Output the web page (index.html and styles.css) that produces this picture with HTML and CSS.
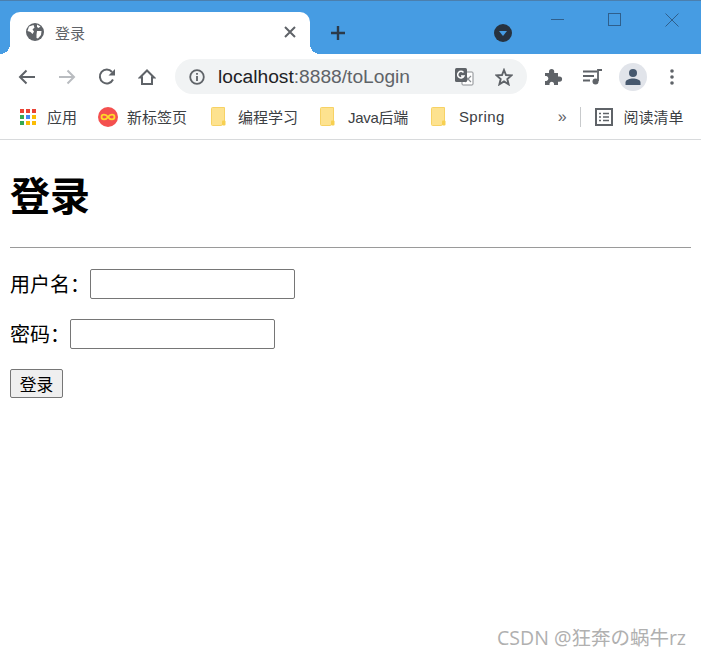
FILE: index.html
```html
<!DOCTYPE html>
<html lang="zh-CN">
<head>
    <meta charset="UTF-8">
    <title>登录</title>
    <link rel="stylesheet" href="styles.css">
</head>
<body>
    <div class="browser">
        <div class="tabstrip">
            <div class="tab">
                <svg class="tab-globe" width="18" height="18" viewBox="0 0 18 18">
                    <circle cx="9" cy="9" r="9" fill="#5f6368"/>
                    <path d="M3 3.5 L7.5 2 L8.5 4.5 L6.5 6.5 L8 8.5 L6.5 11 L4.5 9 L1.5 8 Z M11 8 L15.5 8 L15 12 L12 15.5 L10.5 15 L10.5 11.5 Z M11 1.5 L14.5 3.5 L12.5 5 L11 4 Z" fill="#fff"/>
                </svg>
                <span class="tab-title">登录</span>
                <svg class="tab-close" width="12" height="12" viewBox="0 0 12 12">
                    <path d="M1 1 L11 11 M11 1 L1 11" stroke="#5f6368" stroke-width="2"/>
                </svg>
            </div>
            <svg class="new-tab" width="16" height="16" viewBox="0 0 16 16">
                <path d="M8 1 V15 M1 8 H15" stroke="#2b3a4a" stroke-width="2.4"/>
            </svg>
            <svg class="tab-search" width="18" height="18" viewBox="0 0 18 18">
                <circle cx="9" cy="9" r="9" fill="#27323f"/>
                <path d="M5 7 H13 L9 12 Z" fill="#469ce3"/>
            </svg>
            <div class="win-controls">
                <svg width="14" height="14" viewBox="0 0 14 14"><path d="M0 6.5 H13" stroke="#2f5f8c"/></svg>
                <svg width="14" height="14" viewBox="0 0 14 14"><rect x="0.5" y="0.5" width="12" height="12" fill="none" stroke="#2f5f8c"/></svg>
                <svg width="14" height="14" viewBox="0 0 14 14"><path d="M0.5 0.5 L13.5 13.5 M13.5 0.5 L0.5 13.5" stroke="#2f5f8c"/></svg>
            </div>
        </div>

        <div class="toolbar">
            <svg class="tool back" width="18" height="16" viewBox="0 0 18 16">
                <path d="M17 8 H2 M8.5 1.5 L2 8 L8.5 14.5" fill="none" stroke="#5f6368" stroke-width="2"/>
            </svg>
            <svg class="tool forward" width="18" height="16" viewBox="0 0 18 16">
                <path d="M1 8 H16 M9.5 1.5 L16 8 L9.5 14.5" fill="none" stroke="#b9bcc0" stroke-width="2"/>
            </svg>
            <svg class="tool reload" width="18" height="18" viewBox="0 0 18 18">
                <path d="M15 11.5 A6.9 6.9 0 1 1 14 4" fill="none" stroke="#5f6368" stroke-width="2"/>
                <path d="M17 1 V7.5 H10.5 Z" fill="#5f6368"/>
            </svg>
            <svg class="tool home" width="18" height="18" viewBox="0 0 18 18">
                <path d="M2 9.5 L9 2.5 L16 9.5 H14 V16 H4 V9.5 Z" fill="none" stroke="#5f6368" stroke-width="2" stroke-linejoin="miter"/>
            </svg>
            <div class="omnibox">
                <svg width="16" height="16" viewBox="0 0 16 16">
                    <circle cx="8" cy="8" r="6.8" fill="none" stroke="#5f6368" stroke-width="1.8"/>
                    <path d="M8 7 V12 M8 4 V5.8" stroke="#5f6368" stroke-width="1.8"/>
                </svg>
                <span class="url"><span class="host">localhost</span>:8888/toLogin</span>
                <svg class="translate" width="20" height="20" viewBox="0 0 20 20">
                    <rect x="8" y="5" width="11" height="13" rx="1" fill="#fff" stroke="#8a8d91"/>
                    <path d="M11 9 L17 15 M17 9 L11 15" stroke="#8a8d91" stroke-width="1.2"/>
                    <rect x="1" y="1" width="12" height="14" rx="1.5" fill="#5f6368"/>
                    <path d="M9.5 5.5 A3.3 3.3 0 1 0 10 9 H7" fill="none" stroke="#fff" stroke-width="1.5"/>
                </svg>
                <svg class="star" width="18" height="18" viewBox="0 0 18 18">
                    <path d="M9 2 L11 7 L16.5 7.4 L12.3 11 L13.6 16.3 L9 13.4 L4.4 16.3 L5.7 11 L1.5 7.4 L7 7 Z" fill="none" stroke="#5f6368" stroke-width="1.9"/>
                </svg>
            </div>
            <svg class="puzzle" width="20" height="20" viewBox="0 0 20 20">
                <path d="M2 6 H6 V4.5 A2.6 2.6 0 0 1 11.2 4.5 V6 H15 V9.5 H16.5 A2.6 2.6 0 0 1 16.5 14.7 H15 V18 H11 V16.5 A2.3 2.3 0 0 0 6.5 16.5 V18 H2 V14 H3.5 A2.6 2.6 0 0 0 3.5 9 H2 Z" fill="#5f6368"/>
            </svg>
            <svg class="media" width="20" height="16" viewBox="0 0 20 16">
                <path d="M0 2.5 H14 M0 7 H11 M0 11.5 H7" stroke="#5f6368" stroke-width="1.8"/>
                <path d="M15 12 V1 H19" fill="none" stroke="#5f6368" stroke-width="1.8"/>
                <circle cx="12.5" cy="12.5" r="3" fill="#5f6368"/>
            </svg>
            <div class="avatar">
                <svg width="18" height="18" viewBox="0 0 18 18">
                    <circle cx="9" cy="5" r="4" fill="#46586e"/>
                    <path d="M1.5 17 V14.5 C1.5 11.5 6 10.5 9 10.5 C12 10.5 16.5 11.5 16.5 14.5 V17 Z" fill="#46586e"/>
                </svg>
            </div>
            <svg class="menu" width="4" height="16" viewBox="0 0 4 16">
                <circle cx="2" cy="2" r="1.8" fill="#5f6368"/>
                <circle cx="2" cy="8" r="1.8" fill="#5f6368"/>
                <circle cx="2" cy="14" r="1.8" fill="#5f6368"/>
            </svg>
        </div>

        <div class="bookmarks">
            <div class="bookmark apps">
                <svg width="16" height="16" viewBox="0 0 16 16">
                    <rect x="0" y="0" width="4" height="4" fill="#ea4335"/><rect x="6" y="0" width="4" height="4" fill="#ea4335"/><rect x="12" y="0" width="4" height="4" fill="#ea4335"/>
                    <rect x="0" y="6" width="4" height="4" fill="#34a853"/><rect x="6" y="6" width="4" height="4" fill="#4285f4"/><rect x="12" y="6" width="4" height="4" fill="#fbbc04"/>
                    <rect x="0" y="12" width="4" height="4" fill="#34a853"/><rect x="6" y="12" width="4" height="4" fill="#fbbc04"/><rect x="12" y="12" width="4" height="4" fill="#fbbc04"/>
                </svg>
                <span>应用</span>
            </div>
            <div class="bookmark newtab">
                <svg width="20" height="20" viewBox="0 0 20 20">
                    <circle cx="10" cy="10" r="10" fill="#f4504f"/>
                    <path d="M10 10 C8 6.8 3.5 7 3.5 10 C3.5 13 8 13.2 10 10 C12 6.8 16.5 7 16.5 10 C16.5 13 12 13.2 10 10 Z" fill="none" stroke="#ffd928" stroke-width="1.8"/>
                </svg>
                <span>新标签页</span>
            </div>
            <div class="bookmark study">
                <svg class="folder" width="15" height="19" viewBox="0 0 15 19">
                    <path d="M1.5 0.5 H13.5 V14 L10.5 18.5 H1.5 A1 1 0 0 1 0.5 17.5 V1.5 A1 1 0 0 1 1.5 0.5 Z" fill="#fde28f" stroke="#f7d265"/>
                    <rect x="11" y="13.5" width="3.5" height="5" rx="1" fill="#f7d050"/>
                </svg>
                <span>编程学习</span>
            </div>
            <div class="bookmark java">
                <svg class="folder" width="15" height="19" viewBox="0 0 15 19">
                    <path d="M1.5 0.5 H13.5 V14 L10.5 18.5 H1.5 A1 1 0 0 1 0.5 17.5 V1.5 A1 1 0 0 1 1.5 0.5 Z" fill="#fde28f" stroke="#f7d265"/>
                    <rect x="11" y="13.5" width="3.5" height="5" rx="1" fill="#f7d050"/>
                </svg>
                <span>Java后端</span>
            </div>
            <div class="bookmark spring">
                <svg class="folder" width="15" height="19" viewBox="0 0 15 19">
                    <path d="M1.5 0.5 H13.5 V14 L10.5 18.5 H1.5 A1 1 0 0 1 0.5 17.5 V1.5 A1 1 0 0 1 1.5 0.5 Z" fill="#fde28f" stroke="#f7d265"/>
                    <rect x="11" y="13.5" width="3.5" height="5" rx="1" fill="#f7d050"/>
                </svg>
                <span>Spring</span>
            </div>
            <span class="more">»</span>
            <span class="divider"></span>
            <div class="bookmark reading">
                <svg width="18" height="18" viewBox="0 0 18 18">
                    <rect x="1" y="1" width="16" height="16" fill="none" stroke="#5f6368" stroke-width="2"/>
                    <path d="M4 5.5 H6 M8 5.5 H14 M4 9 H6 M8 9 H14 M4 12.5 H6 M8 12.5 H14" stroke="#5f6368" stroke-width="1.6"/>
                </svg>
                <span>阅读清单</span>
            </div>
        </div>
    </div>

    <div class="page">
        <h1>登录</h1>
        <hr>
        <form class="login-form">
            <p><label>用户名：</label><input type="text"></p>
            <p><label>密码：</label><input type="password"></p>
            <p class="submit-row"><button type="button">登录</button></p>
        </form>
    </div>

    <div class="watermark">CSDN @狂奔の蜗牛rz</div>
</body>
</html>
```

FILE: styles.css
```css
* {
    box-sizing: border-box;
}

html, body {
    margin: 0;
    padding: 0;
}

body {
    position: relative;
    width: 701px;
    height: 656px;
    overflow: hidden;
    background: white;
    font-family: "Liberation Sans", "Noto Sans CJK SC", sans-serif;
    color: black;
}

svg {
    display: block;
    flex: none;
}

.browser {
    border-bottom: 1px solid #d8dadc;
    height: 140px;
}

.tabstrip {
    display: flex;
    align-items: flex-start;
    height: 54px;
    padding: 11px 0 0 10px;
    background: #469ce3;
    border-top: 1px solid #4b7fae;
}

.tab {
    position: relative;
    display: flex;
    align-items: center;
    width: 300px;
    height: 42px;
    padding: 0 14px 2px 16px;
    background: white;
    border-radius: 10px 10px 0 0;
}

/* the little flares at the foot of the active tab */
.tab::before,
.tab::after {
    content: "";
    position: absolute;
    bottom: 0;
    width: 10px;
    height: 10px;
}

.tab::before {
    left: -10px;
    background: radial-gradient(circle at 0 0, transparent 10px, white 10px);
}

.tab::after {
    right: -10px;
    background: radial-gradient(circle at 100% 0, transparent 10px, white 10px);
}

.tab-title {
    margin-left: 11px;
    font-size: 15px;
    color: #5f6368;
}

.tab-close {
    margin-left: auto;
}

.new-tab {
    margin: 13px 0 0 20px;
}

.tab-search {
    margin: 12px 0 0 148px;
}

.win-controls {
    display: flex;
    gap: 43px;
    margin: 1px 0 0 39px;
}

.toolbar {
    display: flex;
    align-items: center;
    height: 40px;
    padding: 5px 0 0 18px;
}

.forward {
    margin-left: 22px;
}

.reload {
    margin-left: 22px;
}

.home {
    margin-left: 22px;
}

.omnibox {
    display: flex;
    align-items: center;
    width: 352px;
    height: 35px;
    margin-left: 19px;
    padding: 0 14px;
    border-radius: 18px;
    background: #f1f3f4;
}

.url {
    margin-left: 13px;
    font-size: 19.2px;
    color: #5f6368;
}

.host {
    color: #202124;
}

.translate {
    margin-left: auto;
    margin-right: 21px;
}

.puzzle {
    margin-left: 16px;
}

.media {
    margin-left: 20px;
}

.avatar {
    display: flex;
    align-items: center;
    justify-content: center;
    width: 28px;
    height: 28px;
    margin-left: 16px;
    border-radius: 50%;
    background: #e1e4ea;
}

.menu {
    margin-left: 23px;
}

.bookmarks {
    display: flex;
    align-items: center;
    height: 45px;
    padding: 0 0 0 20px;
    font-size: 15px;
    color: #3c4043;
}

.bookmark {
    display: flex;
    align-items: center;
}

.apps span {
    margin-left: 11px;
}

.newtab {
    margin-left: 21px;
}

.newtab span {
    margin-left: 9px;
}

.study {
    margin-left: 24px;
}

.java {
    margin-left: 22px;
}

.java span {
    letter-spacing: -0.3px;
}

.spring {
    margin-left: 23px;
}

.spring span {
    letter-spacing: 0.4px;
}

.study span {
    margin-left: 12px;
}

.java span,
.spring span {
    margin-left: 13px;
}

.more {
    margin-left: 53px;
    font-size: 16px;
    color: #5f6368;
}

.divider {
    width: 1px;
    height: 20px;
    margin-left: 13px;
    background: #c8cacc;
}

.reading {
    margin-left: 14px;
}

.reading span {
    margin-left: 11px;
}

.page {
    padding: 0 10px;
}

h1 {
    margin: 30px 0 23px;
    font-size: 40px;
    line-height: 54px;
    font-weight: bold;
}

hr {
    margin: 0;
    height: 1px;
    border: none;
    background: #9a9a9a;
}

.login-form {
    margin-top: 21px;
    font-size: 20px;
}

.login-form p {
    display: flex;
    align-items: center;
    height: 30px;
    margin: 0 0 20px;
}

.login-form label {
    padding-bottom: 2px;
}

.login-form .submit-row {
    height: 29px;
}

.login-form input {
    width: 205px;
    height: 30px;
    padding: 1px 2px;
    border: 1px solid #767676;
    border-radius: 2px;
    background: white;
}

.login-form button {
    width: 53px;
    height: 29px;
    padding: 0;
    border: 1px solid #767676;
    border-radius: 2px;
    background: #efefef;
    color: black;
    font-family: inherit;
    font-size: 16.7px;
}

.watermark {
    position: absolute;
    right: 15px;
    top: 626px;
    font-family: "Open Sans", "Noto Sans CJK SC", sans-serif;
    font-size: 19.5px;
    line-height: 24px;
    color: #b0b0b0;
    white-space: nowrap;
}
```
